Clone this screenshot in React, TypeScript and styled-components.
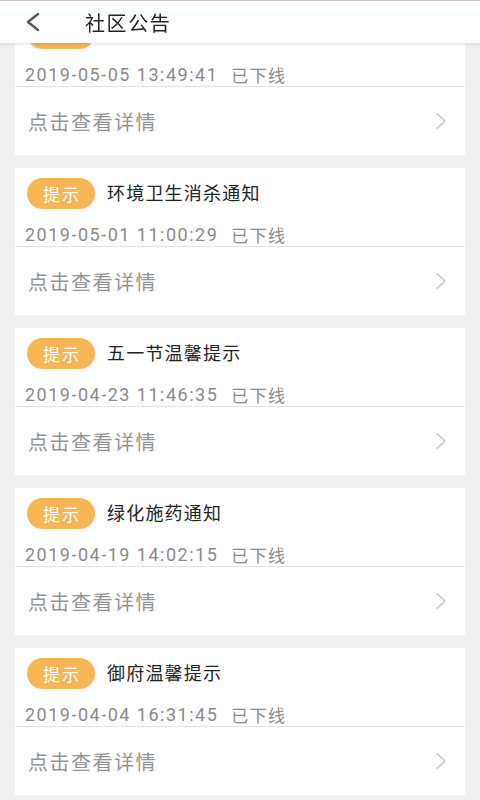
import React from 'react';
import styled, { createGlobalStyle } from 'styled-components';

const GlobalStyle = createGlobalStyle`
  html, body {
    margin: 0;
    padding: 0;
    background: #efefef;
    font-family: Roboto, "Noto Sans CJK SC", sans-serif;
  }
`;

// Header sits over the scrolled list
const Header = styled.header`
  position: fixed;
  top: 0;
  left: 0;
  right: 0;
  height: 42px;
  background: #ffffff;
  border-top: 1px solid #cdbfc5;
  box-shadow: 0 1px 3px rgba(0, 0, 0, 0.12);
  display: flex;
  align-items: center;
  z-index: 10;
`;

const BackButton = styled.div`
  width: 85px;
  height: 42px;
  display: flex;
  align-items: center;
  padding-left: 25px;
  box-sizing: border-box;
`;

const Title = styled.h1`
  margin: 0;
  font-family: "Noto Sans CJK SC", sans-serif;
  font-size: 20px;
  font-weight: 400;
  letter-spacing: 1.6px;
  color: #222;
`;

const List = styled.main`
  display: flex;
  flex-direction: column;
  gap: 13px;
  padding: 8px 15px 5px;
`;

const Card = styled.section`
  background: #ffffff;
  display: flex;
  flex-direction: column;
`;

const TopBlock = styled.div`
  padding: 10px 12px 0 12px;
  height: 79px;
  box-sizing: border-box;
  border-bottom: 1px solid #e2e2e2;
`;

const HeadRow = styled.div`
  display: flex;
  align-items: center;
  gap: 12px;
  height: 31px;
`;

const Badge = styled.span`
  height: 31px;
  width: 68px;
  border-radius: 16px;
  background: #f7b556;
  color: #ffffff;
  font-family: "Noto Sans CJK SC", sans-serif;
  font-size: 17px;
  letter-spacing: 2px;
  display: flex;
  align-items: center;
  justify-content: center;
  padding-left: 2px;
  box-sizing: border-box;
`;

const CardTitle = styled.span`
  font-family: "Noto Sans CJK SC", sans-serif;
  font-size: 18px;
  line-height: 1;
  letter-spacing: 1.2px;
  padding-bottom: 4px;
  color: #222;
`;

const Meta = styled.div`
  display: flex;
  align-items: center;
  gap: 13px;
  margin-top: 13px;
  margin-left: -2px;
  color: #8a8a8a;
  height: 24px;
`;

const DateText = styled.span`
  font-family: Roboto, sans-serif;
  font-size: 18px;
  letter-spacing: 1.5px;
`;

const Status = styled.span`
  font-family: "Noto Sans CJK SC", sans-serif;
  font-size: 17px;
  letter-spacing: 1.4px;
`;

const DetailRow = styled.div`
  height: 68px;
  display: flex;
  align-items: center;
  justify-content: space-between;
  padding: 0 18px 0 13px;
`;

const DetailText = styled.span`
  font-family: "Noto Sans CJK SC", sans-serif;
  font-size: 20px;
  letter-spacing: 1.5px;
  color: #939393;
`;

const items = [
  { title: '社区公告', time: '2019-05-05 13:49:41' },
  { title: '环境卫生消杀通知', time: '2019-05-01 11:00:29' },
  { title: '五一节温馨提示', time: '2019-04-23 11:46:35' },
  { title: '绿化施药通知', time: '2019-04-19 14:02:15' },
  { title: '御府温馨提示', time: '2019-04-04 16:31:45' },
];

const App: React.FC = () => {
  return (
    <>
      <GlobalStyle />
      <Header>
        <BackButton>
          <svg width="15" height="20" viewBox="0 0 15 20">
            <path d="M13 2 L3 10 L13 18" fill="none" stroke="#555" strokeWidth="2.4" strokeLinecap="round" strokeLinejoin="round" />
          </svg>
        </BackButton>
        <Title>社区公告</Title>
      </Header>
      <List>
        {items.map((item) => (
          <Card key={item.time}>
            <TopBlock>
              <HeadRow>
                <Badge>提示</Badge>
                <CardTitle>{item.title}</CardTitle>
              </HeadRow>
              <Meta>
                <DateText>{item.time}</DateText>
                <Status>已下线</Status>
              </Meta>
            </TopBlock>
            <DetailRow>
              <DetailText>点击查看详情</DetailText>
              <svg width="12" height="18" viewBox="0 0 12 18">
                <path d="M2 1.5 L10 9 L2 16.5" fill="none" stroke="#c6c6c6" strokeWidth="1.5" strokeLinecap="round" strokeLinejoin="round" />
              </svg>
            </DetailRow>
          </Card>
        ))}
      </List>
    </>
  );
};

export default App;
